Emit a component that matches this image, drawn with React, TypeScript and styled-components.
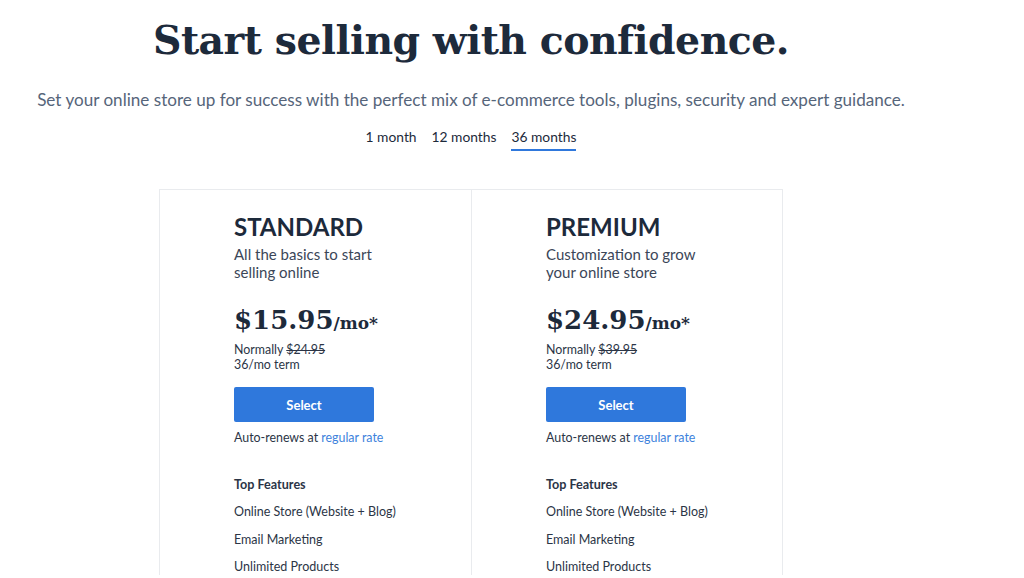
import React from 'react'
import styled, { createGlobalStyle } from 'styled-components'

const ink = '#1d2a3b'
const slate = '#56657a'
const blue = '#2f78dc'
const line = '#e9ebee'

const Global = createGlobalStyle`
  html, body {
    margin: 0;
    padding: 0;
    background: #ffffff;
    font-family: 'Lato', 'Liberation Sans', sans-serif;
    color: ${ink};
    overflow: hidden;
  }
`

const Page = styled.main`
  width: 942px;
  height: 578px;
  overflow: hidden;
  display: flex;
  flex-direction: column;
  align-items: center;
`

const Title = styled.h1`
  margin: 12px 0 0;
  font-family: 'DejaVu Serif', 'Liberation Serif', serif;
  font-weight: 700;
  font-size: 39.4px;
  line-height: 56px;
  letter-spacing: -0.5px;
  color: ${ink};
`

const Lead = styled.p`
  margin: 20px 0 0;
  font-size: 17.1px;
  line-height: 24px;
  color: ${slate};
`

const Tabs = styled.nav`
  display: flex;
  gap: 15px;
  margin-top: 16px;
`

const Tab = styled.span<{ active?: boolean }>`
  font-size: 13.8px;
  line-height: 18px;
  padding-bottom: 3px;
  color: ${ink};
  border-bottom: 2px solid ${(p) => (p.active ? blue : 'transparent')};
`

const Plans = styled.section`
  display: grid;
  grid-template-columns: 311px 311px;
  margin-top: 38px;
  border: 1px solid ${line};
  border-bottom: none;
`

const Plan = styled.article`
  padding: 22px 40px 0 74px;
  & + & {
    border-left: 1px solid ${line};
  }
`

const Name = styled.h2`
  margin: 0;
  font-size: 24px;
  line-height: 30px;
  font-weight: 700;
  color: ${ink};
`

const Blurb = styled.p`
  margin: 3px 0 0;
  width: 165px;
  font-size: 15px;
  line-height: 18px;
  color: #3b4658;
`

const Price = styled.div`
  margin: 22px 0 2px;
  font-family: 'DejaVu Serif', 'Liberation Serif', serif;
  font-weight: 700;
  font-size: 26px;
  line-height: 34px;
  color: ${ink};
`

const Per = styled.span`
  font-size: 17px;
`

const Small = styled.p`
  margin: 0;
  font-size: 12.4px;
  line-height: 15px;
  color: #2b3546;
`

const Old = styled.s`
  text-decoration-thickness: 1px;
`

const Select = styled.button`
  display: block;
  width: 140px;
  height: 35px;
  margin: 15px 0 8px;
  border: none;
  border-radius: 2px;
  background: ${blue};
  color: #fff;
  font-family: inherit;
  font-weight: 700;
  font-size: 13px;
`

const Link = styled.a`
  color: #3d82dc;
  text-decoration: none;
`

const FeatTitle = styled.h3`
  margin: 32px 0 0;
  font-size: 12.6px;
  line-height: 15px;
  font-weight: 700;
  color: #2b3546;
`

const Features = styled.ul`
  list-style: none;
  margin: 12px 0 0;
  padding: 0;
  display: flex;
  flex-direction: column;
  gap: 12px;
  font-size: 12.5px;
  line-height: 15.5px;
  color: #2b3546;
`

const plans = [
  { name: 'STANDARD', blurb: 'All the basics to start selling online', price: '$15.95', old: '$24.95' },
  { name: 'PREMIUM', blurb: 'Customization to grow your online store', price: '$24.95', old: '$39.95' },
]

const features = ['Online Store (Website + Blog)', 'Email Marketing', 'Unlimited Products']

export default function App() {
  return (
    <Page>
      <Global />
      <Title>Start selling with confidence.</Title>
      <Lead>
        Set your online store up for success with the perfect mix of e-commerce tools, plugins, security and expert
        guidance.
      </Lead>
      <Tabs>
        <Tab>1 month</Tab>
        <Tab>12 months</Tab>
        <Tab active>36 months</Tab>
      </Tabs>
      <Plans>
        {plans.map((p) => (
          <Plan key={p.name}>
            <Name>{p.name}</Name>
            <Blurb>{p.blurb}</Blurb>
            <Price>
              {p.price}
              <Per>/mo*</Per>
            </Price>
            <Small>
              Normally <Old>{p.old}</Old>
            </Small>
            <Small>36/mo term</Small>
            <Select>Select</Select>
            <Small>
              Auto-renews at <Link href="#">regular rate</Link>
            </Small>
            <FeatTitle>Top Features</FeatTitle>
            <Features>
              {features.map((f) => (
                <li key={f}>{f}</li>
              ))}
            </Features>
          </Plan>
        ))}
      </Plans>
    </Page>
  )
}
